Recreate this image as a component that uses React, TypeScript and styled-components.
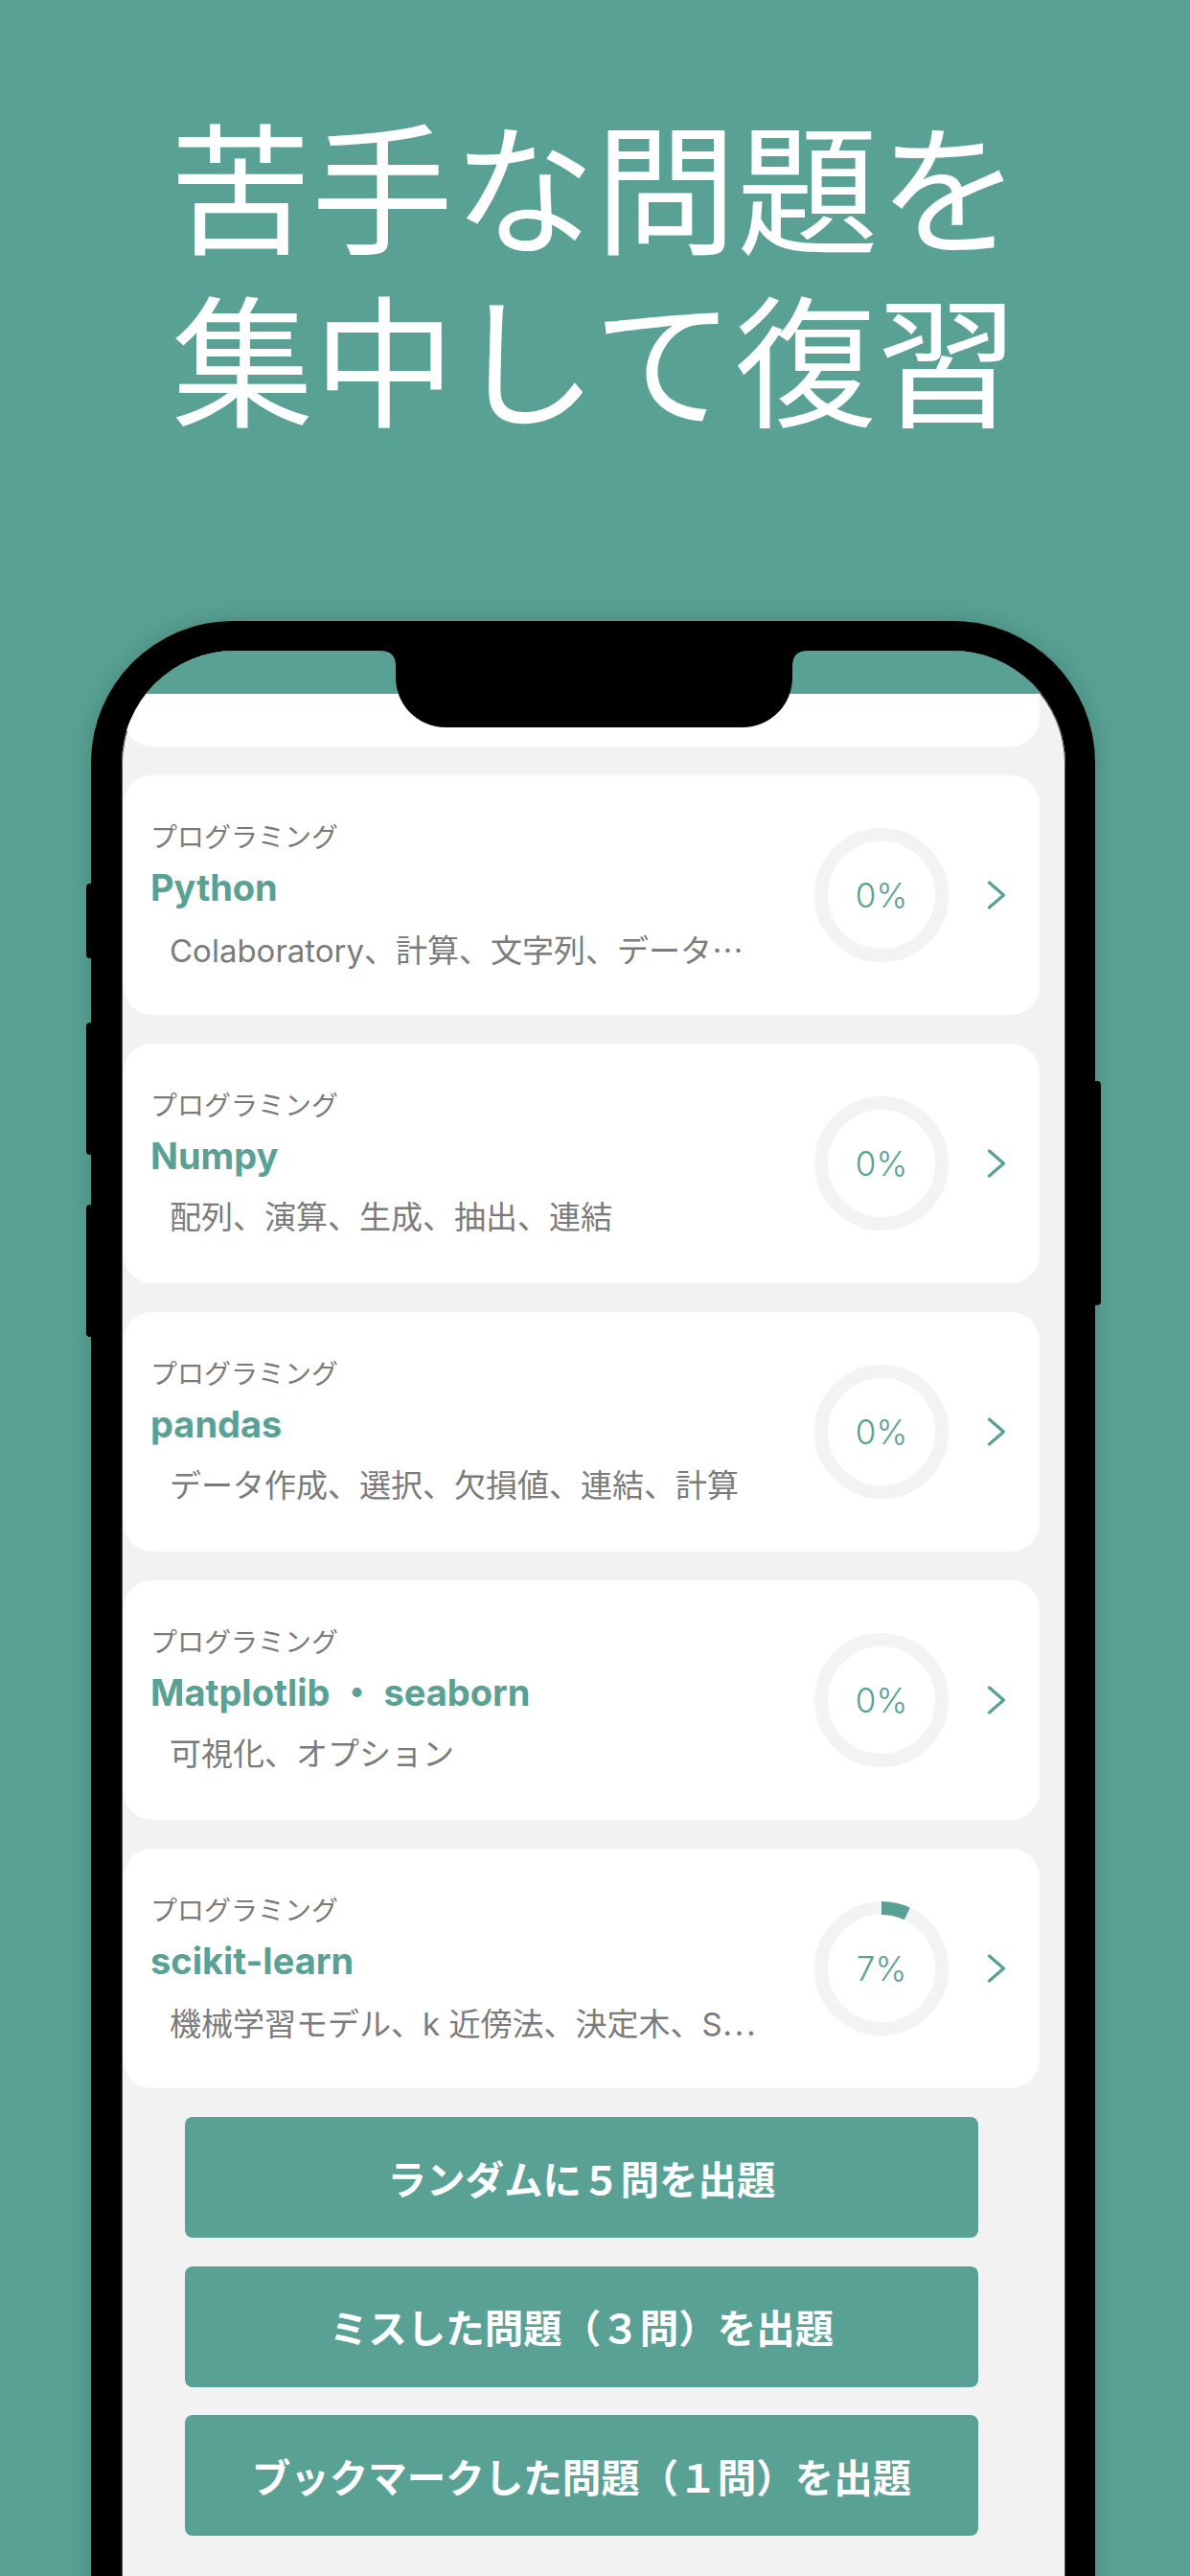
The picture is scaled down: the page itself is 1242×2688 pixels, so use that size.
import React from "react";
import styled, { createGlobalStyle } from "styled-components";

const TEAL = "#58a194";

const GlobalStyle = createGlobalStyle`
  html, body {
    margin: 0;
    padding: 0;
  }
  body {
    background: ${TEAL};
    font-family: "Noto Sans CJK JP", sans-serif;
  }
`;

interface Course {
  category: string;
  title: string;
  summary: string;
  truncated?: boolean;
  progress: number;
}

const courses: Course[] = [
  { category: "プログラミング", title: "Python", summary: "Colaboratory、計算、文字列、データ", truncated: true, progress: 0 },
  { category: "プログラミング", title: "Numpy", summary: "配列、演算、生成、抽出、連結", progress: 0 },
  { category: "プログラミング", title: "pandas", summary: "データ作成、選択、欠損値、連結、計算", progress: 0 },
  { category: "プログラミング", title: "Matplotlib ・ seaborn", summary: "可視化、オプション", progress: 0 },
  { category: "プログラミング", title: "scikit-learn", summary: "機械学習モデル、k 近傍法、決定木、S", truncated: true, progress: 7 },
];

const actions = [
  "ランダムに５問を出題",
  "ミスした問題（３問）を出題",
  "ブックマークした問題（１問）を出題",
];

const Page = styled.div`
  width: 1242px;
  height: 2688px;
  overflow: hidden;
  background: ${TEAL};
  display: flex;
  flex-direction: column;
`;

const Headline = styled.h1`
  margin: 0;
  padding-top: 100px;
  text-align: center;
  color: #fff;
  font-family: "Noto Sans CJK JP", sans-serif;
  font-weight: 400;
  font-size: 148px;
  line-height: 180px;
`;

const Phone = styled.div`
  position: relative;
  flex-shrink: 0;
  margin: 188px 0 0 95px;
  width: 1048px;
  height: 2100px;
  box-sizing: border-box;
  padding: 31px 31px 0 32px;
  background: #000;
  border-radius: 148px 148px 0 0;
  box-shadow: 0 0 26px rgba(0, 0, 0, 0.16);
`;

// 本体の物理ボタン
const SideButton = styled.span<{ $side: "left" | "right"; $top: number; $height: number }>`
  position: absolute;
  top: ${(p) => p.$top}px;
  ${(p) => (p.$side === "left" ? "left: -5px;" : "right: -6px;")}
  width: 10px;
  height: ${(p) => p.$height}px;
  background: #000;
  border-radius: 4px;
`;

const Screen = styled.div`
  position: relative;
  height: 100%;
  background: #f2f2f2;
  border-radius: 118px 118px 0 0;
  overflow: hidden;
  box-shadow: inset 0 0 0 1px #555;
`;

const Notch = styled.svg`
  position: absolute;
  top: 0;
  left: 270px;
  z-index: 2;
`;

const NavBar = styled.div`
  height: 45px;
  background: ${TEAL};
`;

const List = styled.div`
  display: flex;
  flex-direction: column;
  gap: 30px;
  padding: 0 27px 0 2px;
`;

const CutCard = styled.div`
  height: 55px;
  background: #fff;
  border-radius: 0 0 30px 30px;
`;

const Card = styled.div`
  height: 250px;
  box-sizing: border-box;
  display: flex;
  align-items: center;
  padding: 0 35px 0 28px;
  background: #fff;
  border-radius: 30px;
`;

const Info = styled.div`
  flex: 1;
  min-width: 0;
  align-self: flex-start;
  padding-top: 45px;
  display: flex;
  flex-direction: column;
`;

const Category = styled.div`
  font-family: "Noto Sans CJK JP", sans-serif;
  font-size: 28px;
  line-height: 36px;
  color: #7a7a7a;
`;

const Title = styled.div`
  margin-top: 13px;
  font-family: Inter, "Noto Sans CJK JP", sans-serif;
  font-weight: 700;
  font-size: 38px;
  line-height: 46px;
  color: ${TEAL};
`;

const Summary = styled.div`
  margin-top: 20px;
  padding-left: 20px;
  font-family: Inter, "Noto Sans CJK JP", sans-serif;
  font-size: 33px;
  line-height: 42px;
  color: #7b7b7b;
  white-space: nowrap;
`;

const Ellipsis = styled.span`
  font-family: "Noto Sans CJK JP", sans-serif;
`;

const Progress = styled.div`
  display: grid;
  place-items: center;
  width: 140px;
  height: 140px;
  flex-shrink: 0;

  & > * {
    grid-area: 1 / 1;
  }
`;

const Percent = styled.span`
  font-family: Inter, sans-serif;
  font-weight: 300;
  font-size: 35px;
  color: ${TEAL};
`;

const Chevron = styled.svg`
  margin-left: 40px;
  flex-shrink: 0;
`;

const Actions = styled.div`
  display: flex;
  flex-direction: column;
  gap: 29.5px;
  padding: 0 64px;
`;

const ActionButton = styled.button`
  height: 126px;
  border: none;
  border-radius: 8px;
  background: ${TEAL};
  color: #fff;
  font-family: "Noto Sans CJK JP", sans-serif;
  font-weight: 700;
  font-size: 40.5px;
  cursor: pointer;
`;

function Ring({ value }: { value: number }) {
  const r = 63;
  const c = 2 * Math.PI * r;
  return (
    <Progress>
      <svg width="140" height="140" viewBox="0 0 140 140">
        <circle cx="70" cy="70" r={r} fill="none" stroke="#f3f3f3" strokeWidth="14" />
        {value > 0 && (
          <circle
            cx="70"
            cy="70"
            r={r}
            fill="none"
            stroke={TEAL}
            strokeWidth="14"
            strokeDasharray={`${(c * value) / 100} ${c}`}
            transform="rotate(-90 70 70)"
          />
        )}
      </svg>
      <Percent>{value}%</Percent>
    </Progress>
  );
}

function CourseCard({ course }: { course: Course }) {
  return (
    <Card>
      <Info>
        <Category>{course.category}</Category>
        <Title>{course.title}</Title>
        <Summary>
          {course.summary}
          {course.truncated && <Ellipsis>…</Ellipsis>}
        </Summary>
      </Info>
      <Ring value={course.progress} />
      <Chevron width="20" height="30" viewBox="0 0 20 30">
        <polyline points="2.5,2 17.5,15 2.5,28" fill="none" stroke={TEAL} strokeWidth="3.2" strokeLinecap="round" strokeLinejoin="round" />
      </Chevron>
    </Card>
  );
}

export default function App() {
  return (
    <Page>
      <GlobalStyle />
      <Headline>
        苦手な問題を
        <br />
        集中して復習
      </Headline>
      <Phone>
        <SideButton $side="left" $top={274} $height={78} />
        <SideButton $side="left" $top={419} $height={138} />
        <SideButton $side="left" $top={609} $height={138} />
        <SideButton $side="right" $top={480} $height={234} />
        <Screen>
          <Notch width="446" height="80" viewBox="0 0 446 80">
            <path d="M0 0 H446 Q430 0 430 16 V28 A52 52 0 0 1 378 80 H68 A52 52 0 0 1 16 28 V16 Q16 0 0 0 Z" fill="#000" />
          </Notch>
          <NavBar />
          <List>
            <CutCard />
            {courses.map((course, key) => (
              <CourseCard course={course} key={key} />
            ))}
            <Actions>
              {actions.map((label) => (
                <ActionButton key={label}>{label}</ActionButton>
              ))}
            </Actions>
          </List>
        </Screen>
      </Phone>
    </Page>
  );
}
